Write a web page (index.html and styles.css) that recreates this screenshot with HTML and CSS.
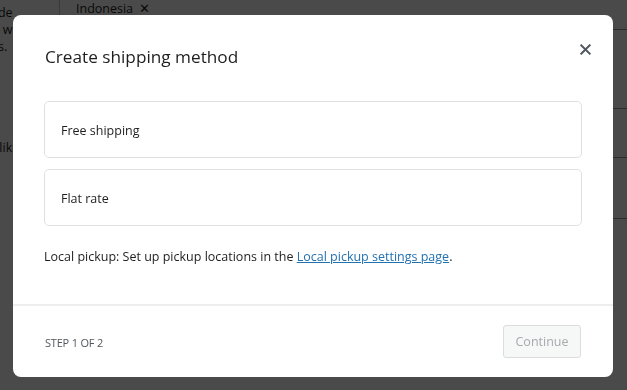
FILE: index.html
```html
<!DOCTYPE html>
<html lang="en">
<head>
  <meta charset="UTF-8" />
  <title>Create shipping method</title>
  <link rel="stylesheet" href="styles.css">
</head>
<body>
  <div class="pagina">
    <div class="coluna-esq">
      <p class="bloco-topo">Include<br>rates w<br>zones.</p>
      <p class="bloco-meio">Looks lik<br><span class="azul">a</span></p>
    </div>
    <div class="coluna-meio">
      <div class="abas">
        <span class="aba">Indonesia <span class="aba-x">✕</span></span>
      </div>
    </div>
    <div class="coluna-dir">
      <div class="linha l1"></div>
      <div class="linha l2"></div>
      <div class="linha l3"><span>Loc</span><span>.</span></div>
      <div class="linha l4"></div>
    </div>
  </div>

  <div class="sombra">
    <div class="modal" role="dialog" aria-labelledby="titulo-modal">
      <div class="modal-cabecalho">
        <h1 id="titulo-modal">Create shipping method</h1>
        <button class="fechar" aria-label="Close">
          <svg width="12" height="12" viewBox="0 0 12 12"><path d="M1.5 1.5 L10.5 10.5 M10.5 1.5 L1.5 10.5" stroke="#50575e" stroke-width="2.2" stroke-linecap="square"/></svg>
        </button>
      </div>

      <div class="modal-corpo">
        <div class="opcao">Free shipping</div>
        <div class="opcao">Flat rate</div>
        <p class="nota">Local pickup: Set up pickup locations in the <a href="#">Local pickup settings page</a>.</p>
      </div>

      <div class="modal-rodape">
        <span class="passo">Step 1 of 2</span>
        <button class="continuar" disabled>Continue</button>
      </div>
    </div>
  </div>
</body>
</html>
```

FILE: styles.css
```css
* {
  margin: 0; padding: 0; box-sizing: border-box;
}
html, body {
  height: 100%;
}
body {
  font-family: "Open Sans", "Noto Sans", sans-serif;
  font-size: 12.5px;
  color: #1e1e1e;
  background: #fff;
  overflow: hidden;
  position: relative;
}

/* page behind the dialog */
.pagina {
  display: grid;
  grid-template-columns: 59px 1fr 210px;
  height: 100%;
}
.coluna-esq {
  overflow: hidden;
  white-space: nowrap;
}
.bloco-topo {
  margin: 4px 0 0 -30px;
  line-height: 17px;
}
.bloco-meio {
  margin: 84px 0 0 -38px;
  line-height: 17px;
}
.azul {
  color: #2271b1;
}
.abas {
  height: 15px;
  padding-left: 16px;
  overflow: hidden;
  border-left: 1px solid #c8c8c8;
}
.aba {
  display: inline-block;
  margin-top: -6px;
  line-height: 18px;
}
.aba-x {
  margin-left: 3px;
}
.coluna-dir {
  display: flex;
  flex-direction: column;
  padding-top: 29px;
}
.linha {
  border-top: 1px solid #9a9a9a;
}
.l1 { height: 79px; }
.l2 { height: 49px; }
.l3 {
  height: 61px;
  display: flex;
  flex-direction: column;
  padding: 16px 0 0 54px;
  line-height: 18px;
}
.l4 { flex: 1; }

/* dialog */
.sombra {
  position: fixed;
  inset: 0;
  background: rgba(0, 0, 0, 0.71);
  padding: 15px 14px 13px 13px;
}
.modal {
  background: #fff;
  width: 600px;
  height: 362px;
  border-radius: 8px;
  display: flex;
  flex-direction: column;
  overflow: hidden;
}
.modal-cabecalho {
  display: flex;
  justify-content: space-between;
  align-items: flex-start;
  padding: 29px 16px 0 32px;
  height: 86px;
}
.modal-cabecalho h1 {
  font-size: 17.2px;
  font-weight: 400;
  line-height: 26px;
  color: #1e1e1e;
}
.fechar {
  background: none;
  border: none;
  width: 24px;
  height: 24px;
  margin-top: -7px;
  display: flex;
  align-items: center;
  justify-content: center;
  cursor: pointer;
}
.fechar svg {
  width: 11px;
  height: 11px;
}
.modal-corpo {
  padding: 0 31px;
  display: flex;
  flex-direction: column;
  gap: 11px;
  flex: 1;
}
.opcao {
  border: 1px solid #e0e0e0;
  border-radius: 5px;
  height: 57px;
  padding: 2px 16px 0;
  display: flex;
  align-items: center;
}
.nota {
  margin-top: 10px;
  line-height: 20px;
}
.nota a {
  color: #2271b1;
  text-decoration: underline;
}
.modal-rodape {
  border-top: 2px solid #eeeeee;
  height: 73px;
  display: flex;
  justify-content: space-between;
  align-items: center;
  padding: 0 32px;
}
.passo {
  text-transform: uppercase;
  font-size: 11px;
  color: #50575e;
  letter-spacing: -0.2px;
  padding-top: 1px;
}
.continuar {
  font-family: inherit;
  font-size: 12.5px;
  width: 78px;
  height: 33px;
  background: #f6f7f7;
  color: #a7aaad;
  border: 1px solid #dcdcde;
  border-radius: 3px;
}
```
